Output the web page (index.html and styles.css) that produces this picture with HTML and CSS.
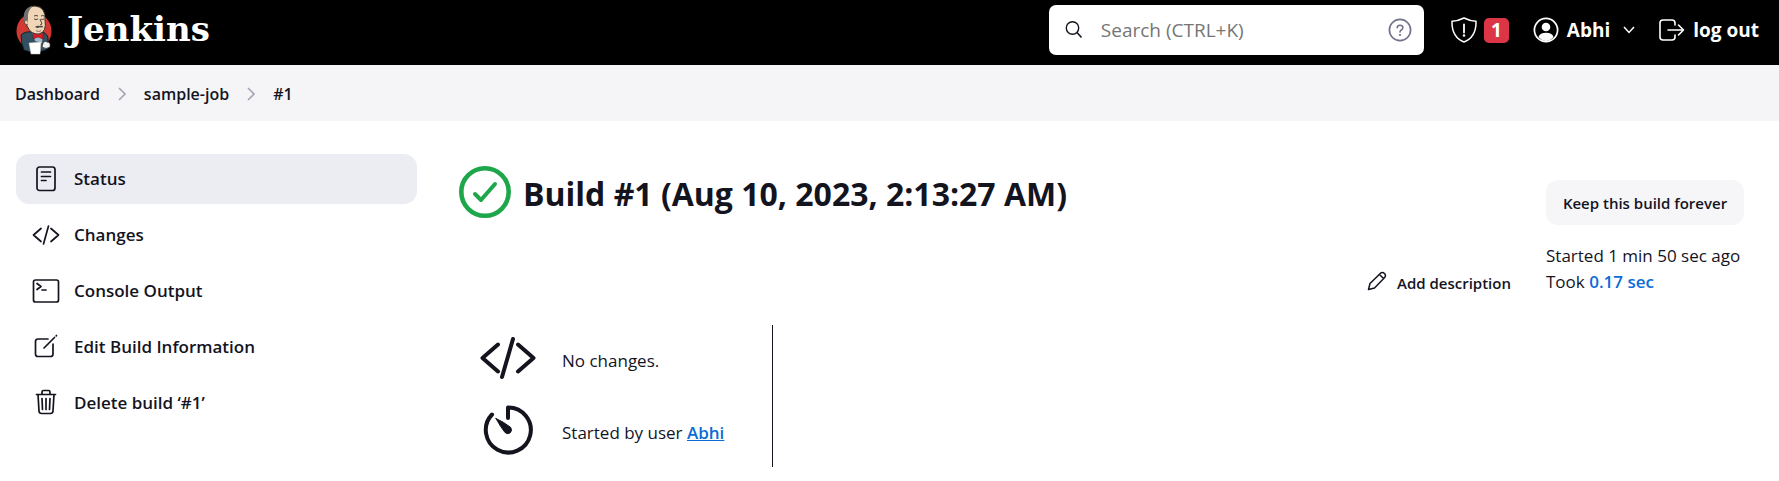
FILE: index.html
```html
<!DOCTYPE html>
<html lang="en">
<head>
<meta charset="utf-8">
<title>sample-job #1 [Jenkins]</title>
<link rel="stylesheet" href="styles.css">
</head>
<body>
<header class="header">
  <a class="brand" href="#">
    <svg class="brand-icon" viewBox="0 0 36 50" aria-hidden="true">
      <ellipse cx="18" cy="26" rx="17.500" ry="18" fill="#d33833"/>
      <path d="M5 30 Q9 26 16 27 L27 27 Q33 30 32 36 L30 45 Q18 49 8 45 Q5 38 5 30Z" fill="#335061" stroke="#12202a"/>
      <path d="M16 27 L27 28 L26 38 L19 36Z" fill="#9fb9cc"/>
      <path d="M9 13 Q8 1 19 1 Q30 2 29 15 Q31 27 23 29 Q15 30 11 21Z" fill="#f0d6b7" stroke="#3b332c"/>
      <path d="M8 16 Q6 3 17 1 Q11 6 12 14 L11 20Z" fill="#70706e"/>
      <path d="M10 15 q-3 1 0 5 l2-1" fill="#f0d6b7" stroke="#3b332c" stroke-width=".7"/>
      <path d="M18 11 q2-1 4 0 M25 11 q2-1 3 0 M18 14 q2 1 4 0 M25 14 q1 1 3 0 M24 14 l2 5-2 1" fill="none" stroke="#3b332c" stroke-width=".9"/>
      <path d="M19 22 q2-2 5-1 q3-1 3 1 q-2 1-3 0 q-2 2-5 0Z M20 25.500 q3 1 5-.3 v.8 q-3 1-5 0Z" fill="#4c4a48"/>
      <path d="M17 28 l5 2 5-2 v6 l-5-2-5 2Z" fill="#e01b24" stroke="#5d1012" stroke-width=".5"/>
      <path d="M13 38 L25 37 L24 49 L15 49Z" fill="#fff" stroke="#c8c8c8" stroke-width=".5"/>
      <path d="M27 38 q2-3 4-1 q4 0 3 5 q-4 3-8 0Z" fill="#f1f1f1" stroke="#222" stroke-width=".7"/>
    </svg>
    <span class="brand-name">Jenkins</span>
  </a>
  <form class="search" role="search">
    <svg class="search-icon" viewBox="0 0 18 18" aria-hidden="true"><circle cx="7.500" cy="7" r="6.200" fill="none" stroke="#14141f" stroke-width="1.400"/><path d="M12 11.500 L16.500 16.500" stroke="#14141f" stroke-width="1.600"/></svg>
    <input class="search-input" type="search" aria-label="Search" placeholder="Search (CTRL+K)">
    <a class="search-help" href="#" aria-label="Search help"><svg viewBox="0 0 24 24" width="24" height="24" fill="none" stroke="#73738c"><circle cx="12" cy="12" r="10.600" stroke-width="1.700"/><path d="M9.200 9.800 Q9.200 7.200 12 7.200 Q14.900 7.200 14.900 9.600 Q14.900 11 13.300 12 Q12 12.800 12 14" stroke-width="1.600" stroke-linecap="round"/><circle cx="12" cy="17" r="1.100" fill="#73738c" stroke="none"/></svg></a>
  </form>
  <nav class="user-menu" aria-label="User">
    <a class="menu-link alerts" href="#" aria-label="Security warnings">
      <svg viewBox="0 0 26 26" width="26" height="26" fill="none" stroke="#fff" stroke-width="1.500"><path d="M13 1 Q19 4 25 4.300 Q25.500 20 13 25 Q.5 20 1 4.300 Q7 4 13 1Z" stroke-linejoin="round"/><path d="M13 7.500 V15.500" stroke-linecap="round" stroke-width="1.800"/><circle cx="13" cy="18.500" r="1.200" fill="#fff" stroke="none"/></svg>
      <span class="badge">1</span>
    </a>
    <a class="menu-link" href="#">
      <svg viewBox="0 0 26 26" width="26" height="26"><circle cx="13" cy="13" r="11.600" fill="none" stroke="#fff" stroke-width="1.700"/><circle cx="13" cy="10" r="4.300" fill="#fff"/><path d="M5.500 20 Q7 15.800 13 15.800 Q19 15.800 20.500 20 Q17 24 13 24 Q9 24 5.500 20Z" fill="#fff"/></svg>
      <span>Abhi</span>
      <svg class="caret" viewBox="0 0 12 8" width="12" height="8" fill="none" stroke="#fff" stroke-width="1.500"><path d="M1 1 L6 6.500 L11 1"/></svg>
    </a>
    <a class="menu-link" href="#">
      <svg viewBox="0 0 26 22" width="26" height="22" fill="none" stroke="#fff" stroke-width="1.600" stroke-linecap="round" stroke-linejoin="round"><path d="M16 6 V4 Q16 1 13 1 H4 Q1 1 1 4 V18 Q1 21 4 21 H13 Q16 21 16 18 V16"/><path d="M9 11 H24.500 M19.500 6 L24.500 11 L19.500 16"/></svg>
      <span>log out</span>
    </a>
  </nav>
</header>

<nav class="breadcrumbs" aria-label="Breadcrumb">
  <a href="#">Dashboard</a>
  <svg viewBox="0 0 8 14" width="8" height="14"><path d="M1 1 L7 7 L1 13" fill="none" stroke="#a6a6b5" stroke-width="1.700"/></svg>
  <a href="#">sample-job</a>
  <svg viewBox="0 0 8 14" width="8" height="14"><path d="M1 1 L7 7 L1 13" fill="none" stroke="#a6a6b5" stroke-width="1.700"/></svg>
  <a href="#">#1</a>
</nav>

<div class="page">
  <nav class="tasks" aria-label="Build">
    <a class="task task-active" href="#"><svg class="icon" viewBox="0 0 28 28"><rect x="5" y="2" width="18" height="23.500" rx="2.500"/><path d="M9.500 7 H18.500 M9.500 11.500 H18.500 M9.500 15.500 H14"/></svg>Status</a>
    <a class="task" href="#"><svg class="icon" viewBox="0 0 28 28"><path d="M9 7.500 L1.500 14 L9 20.500 M19 7.500 L26.500 14 L19 20.500 M16.500 5 L11.500 23"/></svg>Changes</a>
    <a class="task" href="#"><svg class="icon" viewBox="0 0 28 28"><rect x="1.500" y="3" width="25" height="22" rx="2"/><path d="M5 6.500 L9 9.500 L5 12.500 M10 13 H14"/></svg>Console Output</a>
    <a class="task" href="#"><svg class="icon" viewBox="0 0 28 28"><path d="M16 6 H6 Q3.500 6 3.500 8.500 V21 Q3.500 23.500 6 23.500 H18.500 Q21 23.500 21 21 V11 M12 15 L22.500 4.500 M24.200 2.800 L24.500 2.500"/></svg>Edit Build Information</a>
    <a class="task" href="#"><svg class="icon" viewBox="0 0 28 28"><path d="M6 5.500 L7 22 Q7.200 24.500 9.500 24.500 H18.500 Q20.800 24.500 21 22 L22 5.500 M4.500 5.500 H23.500 M10 5.500 V3 Q10 1.500 11.500 1.500 H16.500 Q18 1.500 18 3 V5.500 M10 9.500 L10.500 20.500 M14 9.500 V20.500 M18 9.500 L17.500 20.500"/></svg>Delete build ‘#1’</a>
  </nav>

  <main class="main">
    <div class="build">
      <h1 class="title">
        <svg class="status-icon" viewBox="0 0 52 52" role="img" aria-label="Success" fill="none" stroke="#1ea64b"><circle cx="26" cy="26" r="23.700" stroke-width="4.600"/><path d="M16 28 L22 34 L36 18" stroke-width="4" stroke-linecap="round" stroke-linejoin="round"/></svg>
        <span class="title-text">Build #1 (Aug 10, 2023, 2:13:27 AM)</span>
      </h1>
      <a class="add-description" href="#">
        <svg viewBox="0 0 20 24" width="20" height="24" fill="none" stroke="#14141f" stroke-width="1.500" stroke-linejoin="round"><path d="M1.500 18.500 L3 12.500 L13.500 2.200 Q15.500 .6 17.500 2.500 Q19.300 4.500 17.700 6.500 L7.500 17 Z M12.500 3.500 L16.500 7.500"/></svg>
        Add description
      </a>
      <div class="summary">
        <div class="summary-row">
          <svg class="summary-icon" viewBox="0 0 60 60"><path d="M20 16.500 L4.500 30 L20 43.500 M40 16.500 L55.500 30 L40 43.500 M35 11 L24 49" /></svg>
          <span class="summary-text">No changes.</span>
        </div>
        <div class="summary-row">
          <svg class="summary-icon" viewBox="0 0 60 60"><path d="M30 18 V7.500 A22.500 22.500 0 1 1 14 14.500"/><path d="M18 18.500 Q26 22 32.500 27.300 Q34.500 30 32.500 32.500 Q30 35 27 32.500 Q22.500 27 18 18.500Z" fill="#14141f" stroke-width="1"/></svg>
          <span class="summary-text">Started by user <a class="user" href="#">Abhi</a></span>
        </div>
      </div>
    </div>
    <aside class="info">
      <button class="keep" type="button">Keep this build forever</button>
      <div>Started 1 min 50 sec ago</div>
      <div>Took <a class="duration" href="#">0.17 sec</a></div>
    </aside>
  </main>
</div>
</body>
</html>
```
FILE: styles.css
```css
* { box-sizing: border-box; }

body {
  margin: 0;
  background: #fff;
  color: #14141f;
  font-family: "Open Sans", "Noto Sans", sans-serif;
  font-size: 17px;
  line-height: 26px;
}

a { color: inherit; text-decoration: none; }
svg { flex: none; }

.header {
  display: flex;
  align-items: center;
  height: 65px;
  padding: 0 20px 5px 16px;
  background: #000;
  color: #fff;
}
.brand { display: flex; align-items: center; gap: 15px; margin-right: auto; }
.brand-icon { width: 36px; height: 50px; }
.brand-name { padding-bottom: 2px; font: bold 34px/48px "DejaVu Serif", serif; }

.search {
  display: flex;
  align-items: center;
  width: 375px;
  height: 50px;
  padding: 0 12px 0 16px;
  border-radius: 7px;
  background: #fff;
}
.search-icon { width: 18px; height: 18px; }
.search-input {
  flex: 1;
  min-width: 0;
  padding: 0 0 0 18px;
  border: 0;
  outline: 0;
  background: transparent;
  font: 19px/26px "Open Sans", "Noto Sans", sans-serif;
}
.search-input::placeholder { color: #757575; }
.search-help { display: flex; }

.user-menu {
  display: flex;
  gap: 24px;
  margin-left: 27px;
  font-size: 19px;
  font-weight: 700;
}
.menu-link { display: flex; align-items: center; gap: 8px; }
.alerts { gap: 7px; }
.caret { margin-left: 5px; }
.badge {
  width: 25px;
  height: 25px;
  border-radius: 5px;
  background: #dc3545;
  line-height: 25px;
  text-align: center;
}

.breadcrumbs {
  display: flex;
  align-items: center;
  gap: 18px;
  height: 56px;
  padding: 2px 15px 0;
  background: #f5f5f8;
  font-size: 16px;
  font-weight: 600;
}

.page { display: flex; gap: 42px; padding: 33px 35px 13px 16px; }

.tasks { display: flex; flex: none; flex-direction: column; gap: 6px; width: 401px; }
.task {
  display: flex;
  align-items: center;
  gap: 14px;
  height: 50px;
  padding: 0 16px;
  border-radius: 13px;
  font-weight: 600;
}
.task-active { background: #ecedf3; }
.icon {
  width: 28px;
  height: 28px;
  fill: none;
  stroke: #14141f;
  stroke-width: 1.7;
  stroke-linecap: round;
  stroke-linejoin: round;
}

.main { display: flex; flex: 1; gap: 35px; min-width: 0; }
.build { display: flex; flex: 1; flex-direction: column; }
.title {
  display: flex;
  align-items: center;
  gap: 12px;
  height: 52px;
  margin: 12px 0 52px;
  font-size: 32px;
  font-weight: 700;
}
.title-text { padding-top: 3px; }
.status-icon { width: 52px; height: 52px; }
.add-description {
  display: flex;
  align-items: center;
  align-self: flex-end;
  gap: 10px;
  font-size: 15px;
  font-weight: 600;
}
.summary {
  display: flex;
  flex-direction: column;
  align-self: flex-start;
  gap: 12px;
  width: 314px;
  margin-top: 29px;
  padding: 3px 19px 7px;
  border-right: 1px solid #14141f;
}
.summary-row { display: flex; align-items: center; gap: 24px; }
.summary-text { padding-top: 6px; }
.summary-icon {
  width: 60px;
  height: 60px;
  fill: none;
  stroke: #14141f;
  stroke-width: 4;
  stroke-linecap: round;
  stroke-linejoin: round;
}

.info { flex: none; width: 198px; padding-top: 26px; white-space: nowrap; }
.keep {
  width: 100%;
  height: 45px;
  margin-bottom: 18px;
  padding: 0;
  border: 0;
  border-radius: 12px;
  background: #f6f6f9;
  color: inherit;
  font: 600 15px/26px "Open Sans", "Noto Sans", sans-serif;
}
.user, .duration { color: #0b6bd8; font-weight: 600; }
.user { text-decoration: underline; }
```
